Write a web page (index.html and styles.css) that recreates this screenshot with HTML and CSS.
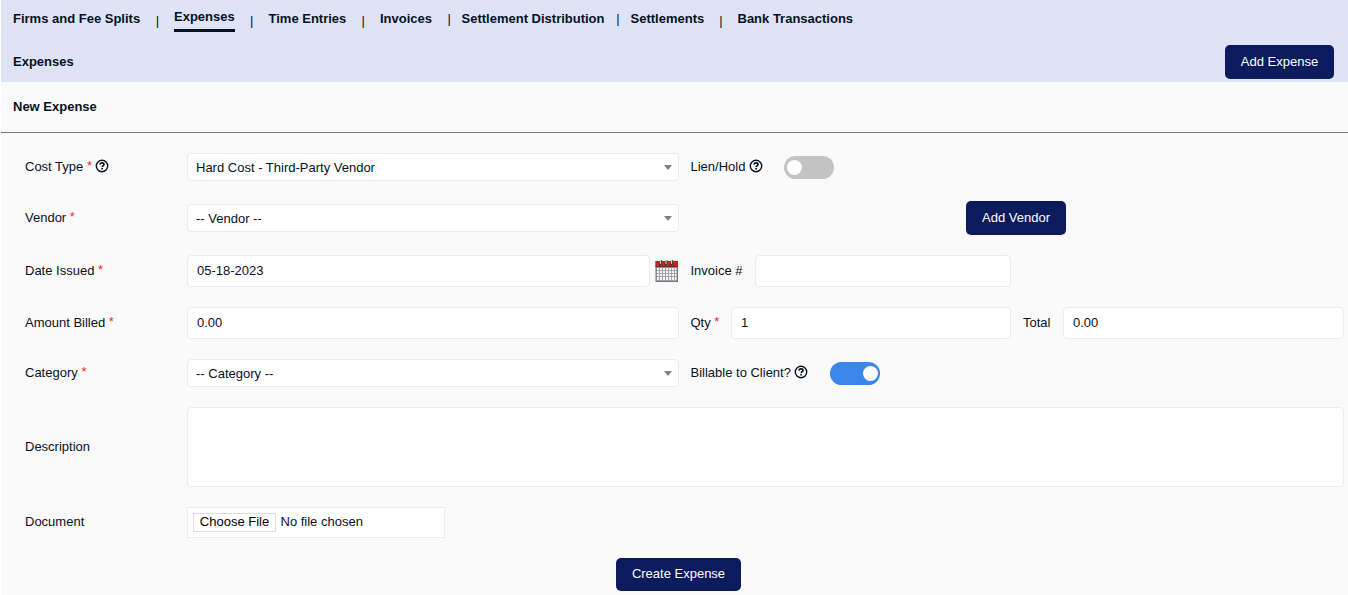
FILE: index.html
```html
<!DOCTYPE html>
<html lang="en">
<head>
<meta charset="utf-8">
<title>New Expense</title>
<link rel="stylesheet" href="styles.css">
</head>
<body>
<svg class="defs" width="0" height="0">
  <symbol id="help" viewBox="0 0 14 14">
    <circle cx="7" cy="7" r="5.700" fill="none" stroke="currentColor" stroke-width="1.400"/>
    <path d="M4.900 5.700C5.100 4.400 6 3.900 7 3.900c1.200 0 2 .65 2 1.600 0 1.200-1.800 1.250-1.800 2.450" fill="none" stroke="currentColor" stroke-width="1.600"/>
    <rect x="6.300" y="8.900" width="1.700" height="1.600" fill="currentColor"/>
  </symbol>
</svg>
<header class="header">
  <nav class="tabs">
    <a class="tab tab-firms">Firms and Fee Splits</a><span class="sep low sep-wide">|</span>
    <a class="tab active">Expenses</a><span class="sep low sep-wide sep-time">|</span>
    <a class="tab tab-time">Time Entries</a><span class="sep low sep-wide sep-inv">|</span>
    <a class="tab tab-invoices">Invoices</a><span class="sep sep-invoices">|</span>
    <a class="tab tab-dist">Settlement Distribution</a><span class="sep sep-dist">|</span>
    <a class="tab tab-settlements">Settlements</a><span class="sep low sep-wide">|</span>
    <a class="tab">Bank Transactions</a>
  </nav>
  <div class="subbar">
    <h1 class="heading">Expenses</h1>
    <button class="btn btn-expense">Add Expense</button>
  </div>
</header>
<main class="panel">
  <h2 class="heading panel-title">New Expense</h2>
  <form class="form">
    <div class="row row-select">
      <label class="label">Cost Type <i class="req">*</i> <svg class="help"><use href="#help"/></svg></label>
      <div class="control select"><span>Hard Cost - Third-Party Vendor</span><b class="caret"></b></div>
      <div class="side"><label class="label side-lien">Lien/Hold <svg class="help help-side"><use href="#help"/></svg></label><span class="switch"></span></div>
    </div>
    <div class="row row-vendor">
      <label class="label">Vendor <i class="req">*</i></label>
      <div class="control select"><span>-- Vendor --</span><b class="caret"></b></div>
      <div class="side side-vendor"><button class="btn btn-vendor" type="button">Add Vendor</button></div>
    </div>
    <div class="row row-input">
      <label class="label">Date Issued <i class="req">*</i></label>
      <div class="date">
        <div class="control input">05-18-2023</div>
        <svg class="calendar" viewBox="0 0 24 24">
          <path d="M.5 2h22.500v21H.5z" fill="#77757a"/>
          <path d="M.5 2h22.500v6H.5z" fill="#c3221e"/>
          <path d="M.5 7h22.500v1H.5z" fill="#7c2725"/>
          <path d="M1.500 8.500h20.500v13.500H1.500z" fill="#a3a2a6"/>
          <path d="M2 9h2v2H2zM5 9h2v2H5zM8 9h2v2H8zM11 9h2v2h-2zM14 9h2v2h-2zM17 9h2v2h-2zM20 9h1.500v2H20zM2 12h2v2H2zM5 12h2v2H5zM8 12h2v2H8zM11 12h2v2h-2zM14 12h2v2h-2zM17 12h2v2h-2zM20 12h1.500v2H20zM2 15h2v2H2zM5 15h2v2H5zM8 15h2v2H8zM11 15h2v2h-2zM14 15h2v2h-2zM17 15h2v2h-2zM20 15h1.500v2H20zM2 18h2v3H2zM5 18h2v3H5zM8 18h2v3H8zM11 18h2v3h-2zM14 18h2v3h-2zM17 18h2v3h-2zM20 18h1.500v3H20z" fill="#f6f5f7"/>
          <path d="M4 5.500h2M9.500 5.500h2M15 5.500h2" stroke="#38383a" stroke-width="2"/>
          <path d="M6.500 6V1M12 6V1M17.500 6V1" stroke="#48484b"/>
          <path d="M5.500 5V.5M11 5V.5M16.500 5V.5" stroke="#c9c8ca"/>
        </svg>
      </div>
      <div class="side"><label class="label side-invoice">Invoice #</label><div class="control input invoice"></div></div>
    </div>
    <div class="row row-input">
      <label class="label">Amount Billed <i class="req">*</i></label>
      <div class="control input">0.00</div>
      <div class="side"><label class="label side-qty">Qty <i class="req">*</i></label><div class="control input qty">1</div><label class="label side-total">Total</label><div class="control input total">0.00</div></div>
    </div>
    <div class="row row-select">
      <label class="label">Category <i class="req">*</i></label>
      <div class="control select"><span>-- Category --</span><b class="caret"></b></div>
      <div class="side"><label class="label side-billable">Billable to Client? <svg class="help"><use href="#help"/></svg></label><span class="switch on"></span></div>
    </div>
    <div class="row row-wide">
      <label class="label">Description</label>
      <div class="control textarea"></div>
    </div>
    <div class="row row-file">
      <label class="label">Document</label>
      <div class="file"><span class="choose">Choose File</span><span>No file chosen</span></div>
    </div>
    <div class="actions"><button class="btn btn-create" type="button">Create Expense</button></div>
  </form>
</main>
</body>
</html>
```
FILE: styles.css
```css
* { box-sizing: border-box; }
body {
  margin: 0;
  padding-left: 1px;
  height: 595px;
  overflow: hidden;
  background: #fff;
  color: #06121f;
  font: 13px/16px "Liberation Sans", Arial, sans-serif;
}
.defs { display: block; }
.header { height: 82px; background: #dee4f6; }
.tabs { display: flex; height: 45px; padding: 11px 0 0 12px; font-weight: bold; white-space: nowrap; }
.tab { flex: none; height: 16px; }
.tab-firms { width: 128px; }
.active { width: 61px; height: 23px; margin-top: -2px; border-bottom: 3px solid #06121f; }
.tab-time { width: 78px; }
.tab-invoices { width: 53px; }
.tab-dist { width: 144px; }
.tab-settlements { width: 74px; }
.sep { flex: none; font-weight: normal; text-align: center; }
.sep-wide { width: 33px; }
.sep-time { width: 33.500px; }
.sep-inv { width: 33.500px; }
.sep-invoices { width: 28.500px; padding-left: 4px; }
.sep-dist { width: 25px; }
.low { padding-top: 2px; }
.subbar { display: flex; justify-content: space-between; align-items: center; height: 34px; padding: 0 14px 0 12px; }
.heading { margin: 0; font-size: 13px; line-height: 16px; }
.btn {
  display: block;
  height: 34px;
  padding: 0 0 1px;
  border: 0;
  border-radius: 5px;
  background: #0b1b5c;
  color: #fff;
  font: 13px/16px "Liberation Sans", Arial, sans-serif;
}
.btn-expense { width: 109px; }
.btn-vendor { width: 100px; }
.btn-create { width: 125px; height: 33px; }
.panel { height: 513px; background: #fafafa; }
.panel-title { height: 51px; padding: 17px 12px 0; border-bottom: 1px solid #76787a; }
.form { display: flex; flex-direction: column; gap: 20px; padding: 20px 4px 0 24px; }
.row { display: grid; grid-template-columns: 162px 492px 1fr; align-items: center; }
.row-select { height: 28px; }
.row-vendor { height: 34px; }
.row-input { height: 32px; }
.row-wide { height: 80px; grid-template-columns: 162px 1fr; }
.row-file { height: 31px; grid-template-columns: 162px 258px; }
.label { display: block; flex: none; padding-bottom: 1px; white-space: nowrap; }
.req { color: #fb2a1c; font-style: normal; line-height: 0; vertical-align: 1px; }
.help { width: 14px; height: 14px; margin-left: -1px; vertical-align: -2px; }
.help-side { margin-left: -.5px; }
.control { border: 1px solid #ececee; border-radius: 4px; background: #fff; }
.select { display: flex; align-items: center; justify-content: space-between; height: 28px; padding: 1px 6px 0 8px; }
.caret { width: 0; border: 4.500px solid transparent; border-top: 5px solid #808080; border-bottom: 0; }
.input { height: 32px; padding: 7px 9px; }
.textarea { height: 80px; }
.date { display: grid; grid-template-columns: 463px 24px; column-gap: 5px; align-items: center; }
.calendar { width: 24px; height: 24px; }
.side { display: flex; align-items: center; padding-left: 11.500px; }
.side-lien { width: 93.500px; }
.side-billable { width: 139.500px; }
.side-invoice { width: 64.500px; }
.side-qty { width: 40.500px; }
.side-total { width: 52px; padding-left: 12px; }
.side-vendor { padding-left: 287px; }
.invoice { width: 256px; }
.qty { width: 280px; }
.total { width: 281px; }
.switch { display: flex; align-items: center; width: 50px; height: 23px; padding: 0 3px; border-radius: 12px; background: #c4c4c4; margin-top: 1px; }
.switch::before { content: ""; width: 15px; height: 15px; border-radius: 50%; background: #fff; }
.on { justify-content: flex-end; padding-right: 2px; background: #3a86ec; }
.file { display: flex; align-items: center; gap: 4.500px; height: 31px; padding: 0 5px 1px; border: 1px solid #ececee; background: #fff; }
.choose { width: 83px; height: 19px; border: 1px solid #dedede; line-height: 16px; text-align: center; color: #000; }
.actions { display: flex; padding-left: 591px; }
```
